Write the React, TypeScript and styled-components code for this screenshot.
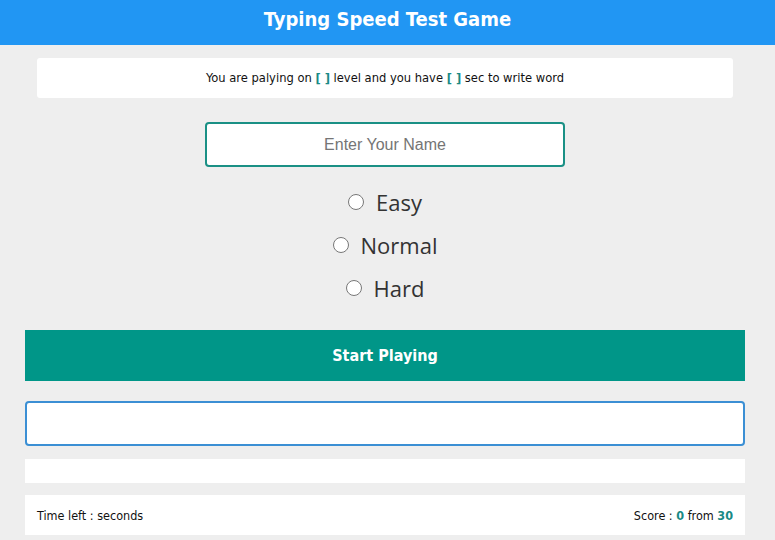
import React from 'react';
import styled, { createGlobalStyle } from 'styled-components';

const GlobalStyle = createGlobalStyle`
    body {
        margin: 0;
        background: #eeeeee;
        font-family: "DejaVu Sans Condensed", "DejaVu Sans", sans-serif;
    }
`

const levels = ['Easy', 'Normal', 'Hard'];

const App: React.FC = () => {
    return (
        <>
            <GlobalStyle />
            <Header>Typing Speed Test Game</Header>
            <Main>
                <Message>
                    You are palying on <Mark>[ ]</Mark> level and you have <Mark>[ ]</Mark> sec to write word
                </Message>
                <NameInput placeholder="Enter Your Name" />
                <Levels>
                    {levels.map((level) => (
                        <Level key={level}>
                            <Radio type="radio" name="level" />
                            <span>{level}</span>
                        </Level>
                    ))}
                </Levels>
                <StartButton>Start Playing</StartButton>
                <WordInput />
                <Upcoming />
                <Footer>
                    <span>Time left : seconds</span>
                    <span>Score : <Mark>0</Mark> from <Mark>30</Mark></span>
                </Footer>
            </Main>
        </>
    )
}

export default App;

const Header = styled.h1`
    margin: 0;
    height: 45px;
    background: #2196f3;
    color: #fff;
    font-size: 20px;
    font-weight: bold;
    display: flex;
    align-items: center;
    justify-content: center;
    padding-bottom: 8px;
    box-sizing: border-box;
`

const Main = styled.div`
    width: 720px;
    margin-left: 25px;
    display: flex;
    flex-direction: column;
    align-items: center;
`

const Message = styled.div`
    margin-top: 13px;
    width: 696px;
    height: 40px;
    line-height: 40px;
    background: #fff;
    border-radius: 3px;
    text-align: center;
    font-size: 12.8px;
    color: #111;
`

const Mark = styled.b`
    color: #1a8a85;
`

const NameInput = styled.input`
    margin-top: 24px;
    width: 360px;
    height: 45px;
    box-sizing: border-box;
    border: 2px solid #1a9085;
    border-radius: 4px;
    background: #fff;
    text-align: center;
    font-family: "Liberation Sans", Arial, sans-serif;
    font-size: 16px;
    outline: none;
    &::placeholder {
        color: #757575;
    }
`

const Levels = styled.div`
    margin-top: 17px;
    display: flex;
    flex-direction: column;
    align-items: center;
    gap: 7px;
`

const Level = styled.label`
    height: 36px;
    display: flex;
    align-items: center;
    gap: 12px;
    font-family: "Open Sans", "Noto Sans", sans-serif;
    font-size: 22px;
    color: #333;
`

const Radio = styled.input`
    margin: 0;
    width: 16px;
    height: 16px;
`

const StartButton = styled.button`
    margin-top: 24px;
    width: 720px;
    height: 51px;
    border: none;
    background: #009688;
    color: #fff;
    font-family: inherit;
    font-size: 16px;
    font-weight: bold;
`

const WordInput = styled.input`
    margin-top: 20px;
    width: 720px;
    height: 45px;
    box-sizing: border-box;
    border: 2px solid #3b8fd4;
    border-radius: 4px;
    background: #fff;
    outline: none;
`

const Upcoming = styled.div`
    margin-top: 13px;
    width: 720px;
    height: 24px;
    background: #fff;
`

const Footer = styled.div`
    margin-top: 12px;
    width: 720px;
    height: 40px;
    box-sizing: border-box;
    padding: 0 12px;
    background: #fff;
    display: flex;
    align-items: center;
    justify-content: space-between;
    font-size: 12.5px;
    color: #111;
`
